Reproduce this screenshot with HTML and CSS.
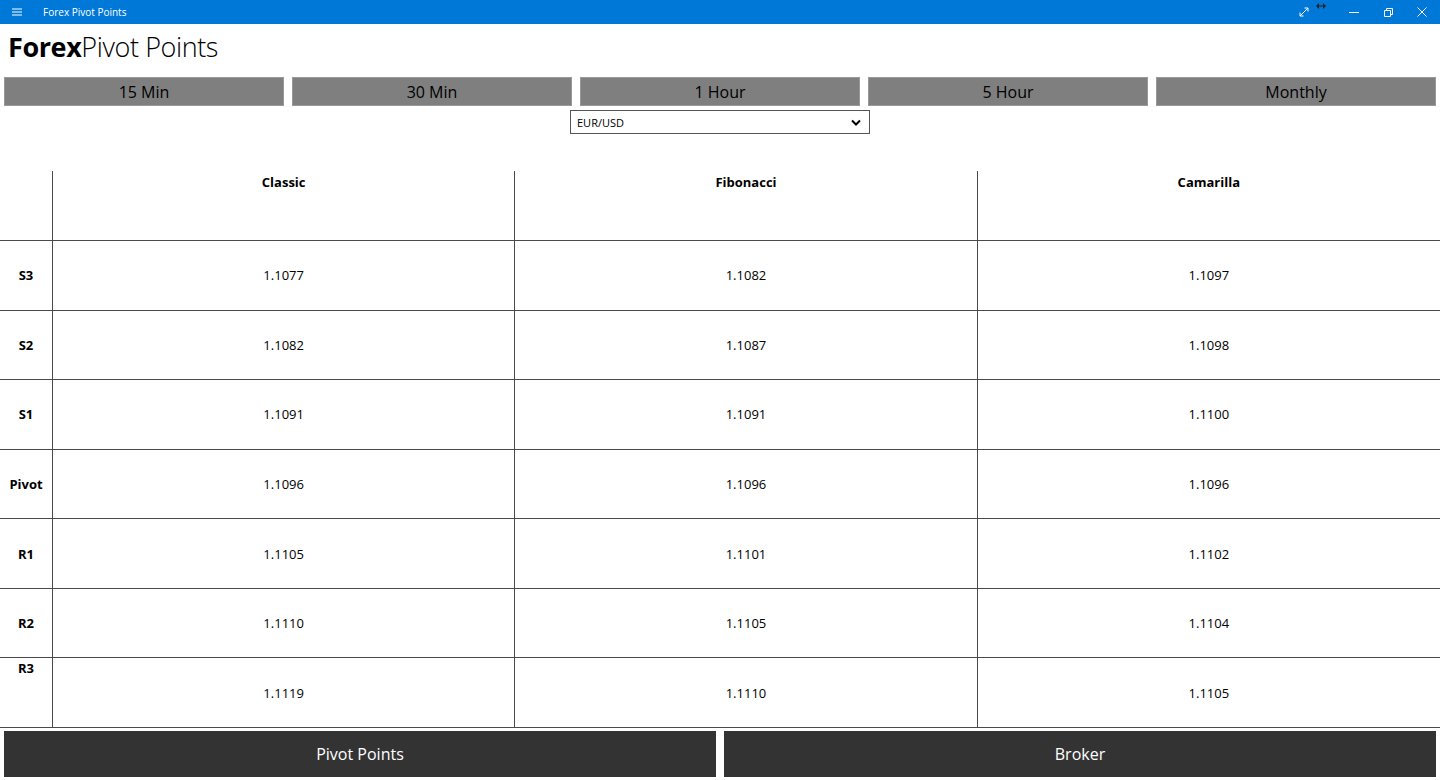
FILE: index.html
```html
<!DOCTYPE html>
<html lang="en">
<head>
    <meta charset="UTF-8">
    <meta name="viewport" content="width=device-width, initial-scale=1.0">
    <title>Forex Pivot Points</title>
    <link rel="stylesheet" href="styles.css">
</head>
<body>
    <div class="titlebar">
        <div class="titlebar-left">
            <svg class="menu-icon" width="12" height="10" viewBox="0 0 12 10">
                <path d="M1 2h10M1 5h10M1 8h10" stroke="#fff" stroke-width="1"/>
            </svg>
            <span class="app-name">Forex Pivot Points</span>
        </div>
        <div class="window-controls">
            <svg class="ctl" width="12" height="12" viewBox="0 0 12 12">
                <path d="M2 10L10 2M6.5 2H10V5.5M2 6.5V10H5.5" stroke="#fff" stroke-width="1" fill="none"/>
            </svg>
            <svg class="drag" width="10" height="6" viewBox="0 0 10 6">
                <path d="M0 3L3 0V6ZM10 3L7 0V6ZM3 2.5h4v1H3z" fill="#222"/>
            </svg>
            <svg class="ctl" width="12" height="12" viewBox="0 0 12 12">
                <path d="M1 6.5h10" stroke="#fff" stroke-width="1"/>
            </svg>
            <svg class="ctl" width="12" height="12" viewBox="0 0 12 12">
                <path d="M2.5 4.5h6v6h-6zM4.5 4.5V2.5h6v6h-2" stroke="#fff" stroke-width="1" fill="none"/>
            </svg>
            <svg class="ctl" width="12" height="12" viewBox="0 0 12 12">
                <path d="M1.5 1.5l9 9M10.5 1.5l-9 9" stroke="#fff" stroke-width="1"/>
            </svg>
        </div>
    </div>

    <h1 class="heading"><b>Forex</b>Pivot Points</h1>

    <div class="tabs">
        <button class="tab">15 Min</button>
        <button class="tab">30 Min</button>
        <button class="tab">1 Hour</button>
        <button class="tab">5 Hour</button>
        <button class="tab">Monthly</button>
    </div>

    <div class="pair-row">
        <div class="pair-select">
            <span>EUR/USD</span>
            <svg width="10" height="7" viewBox="0 0 10 7">
                <path d="M1 1.5L5 5.5l4-4" stroke="#000" stroke-width="2" fill="none"/>
            </svg>
        </div>
    </div>

    <div class="pivot-table">
        <div class="cell head"></div>
        <div class="cell head">Classic</div>
        <div class="cell head">Fibonacci</div>
        <div class="cell head last">Camarilla</div>

        <div class="cell label">S3</div>
        <div class="cell">1.1077</div>
        <div class="cell">1.1082</div>
        <div class="cell last">1.1097</div>

        <div class="cell label">S2</div>
        <div class="cell">1.1082</div>
        <div class="cell">1.1087</div>
        <div class="cell last">1.1098</div>

        <div class="cell label">S1</div>
        <div class="cell">1.1091</div>
        <div class="cell">1.1091</div>
        <div class="cell last">1.1100</div>

        <div class="cell label">Pivot</div>
        <div class="cell">1.1096</div>
        <div class="cell">1.1096</div>
        <div class="cell last">1.1096</div>

        <div class="cell label">R1</div>
        <div class="cell">1.1105</div>
        <div class="cell">1.1101</div>
        <div class="cell last">1.1102</div>

        <div class="cell label">R2</div>
        <div class="cell">1.1110</div>
        <div class="cell">1.1105</div>
        <div class="cell last">1.1104</div>

        <div class="cell label top">R3</div>
        <div class="cell">1.1119</div>
        <div class="cell">1.1110</div>
        <div class="cell last">1.1105</div>
    </div>

    <div class="bottom-nav">
        <button class="nav-btn">Pivot Points</button>
        <button class="nav-btn">Broker</button>
    </div>
</body>
</html>
```

FILE: styles.css
```css
body {
    margin: 0;
    height: 780px;
    overflow: hidden;
    display: flex;
    flex-direction: column;
    background: #fff;
    font-family: "Open Sans", "Noto Sans", sans-serif;
    color: #000;
}

.titlebar {
    height: 24px;
    flex: none;
    background: #0078d7;
    color: #fff;
    display: flex;
    justify-content: space-between;
    align-items: center;
}

.titlebar-left {
    display: flex;
    align-items: center;
}

.menu-icon {
    margin-left: 11px;
}

.app-name {
    margin-left: 20px;
    font-size: 10px;
}

.window-controls {
    display: flex;
    align-items: center;
    height: 100%;
    padding-right: 12px;
}

.window-controls .ctl {
    margin-left: 22px;
}

.window-controls .ctl:first-child {
    margin-left: 0;
}

.window-controls .drag {
    margin: 0 0 12px 6px;
}

.heading {
    margin: 0;
    height: 53px;
    flex: none;
    box-sizing: border-box;
    padding: 5px 0 0 8px;
    font-size: 27px;
    font-weight: 300;
    line-height: 36px;
    letter-spacing: -0.4px;
}

.heading b {
    font-weight: 700;
}

.tabs {
    display: flex;
    gap: 8px;
    padding: 0 4px;
    height: 29px;
    flex: none;
}

.tab {
    flex: 1;
    background: #7f7f7f;
    border: 1px solid #999;
    font-family: inherit;
    font-size: 16px;
    font-weight: 500;
    color: #000;
    padding: 1px 0 0;
    cursor: pointer;
}

.pair-row {
    display: flex;
    justify-content: center;
    margin-top: 4px;
    flex: none;
}

.pair-select {
    width: 300px;
    height: 24px;
    box-sizing: border-box;
    border: 1px solid #555;
    display: flex;
    align-items: center;
    justify-content: space-between;
    padding: 0 8px 0 6px;
    font-size: 11px;
}

.pivot-table {
    margin-top: 37px;
    height: 557px;
    flex: none;
    display: grid;
    grid-template-columns: 53px 1fr 1fr 1fr;
    grid-template-rows: 70px repeat(7, 1fr);
}

.cell {
    border-right: 1px solid #4a4a4a;
    border-bottom: 1px solid #4a4a4a;
    display: flex;
    align-items: center;
    justify-content: center;
    font-size: 13px;
}

.cell.last {
    border-right: none;
}

.cell.head {
    align-items: flex-start;
    padding-top: 2px;
    font-weight: 700;
}

.cell.label {
    font-weight: 700;
}

.cell.label.top {
    align-items: flex-start;
    padding-top: 1px;
}

.bottom-nav {
    display: flex;
    gap: 8px;
    padding: 3px 4px 0;
    height: 46px;
    flex: none;
}

.nav-btn {
    flex: 1;
    background: #333;
    border: none;
    color: #fff;
    font-family: inherit;
    font-size: 16px;
    font-weight: 500;
    cursor: pointer;
}
```
